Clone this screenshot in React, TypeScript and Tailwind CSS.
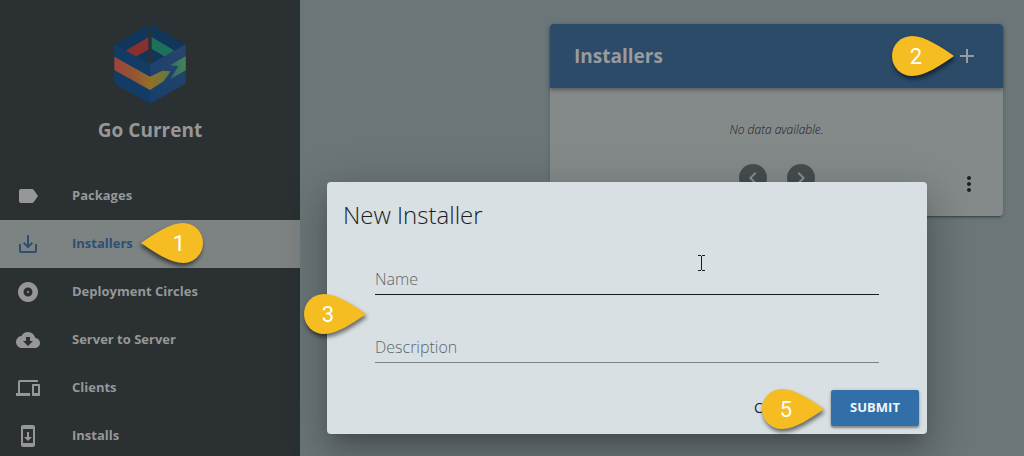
import type { ReactNode } from "react";
import type { IconType } from "react-icons";
import {
  MdAdd,
  MdAlbum,
  MdChevronLeft,
  MdChevronRight,
  MdCloudDownload,
  MdDevices,
  MdLabel,
  MdMoreVert,
  MdSaveAlt,
  MdSystemUpdate,
} from "react-icons/md";

interface NavItem {
  label: string;
  icon: IconType;
  active?: boolean;
}

const NAV_ITEMS: NavItem[] = [
  { label: "Packages", icon: MdLabel },
  { label: "Installers", icon: MdSaveAlt, active: true },
  { label: "Deployment Circles", icon: MdAlbum },
  { label: "Server to Server", icon: MdCloudDownload },
  { label: "Clients", icon: MdDevices },
  { label: "Installs", icon: MdSystemUpdate },
];

function Logo() {
  return (
    <svg viewBox="90 42 240 240" className="size-20" aria-hidden="true">
      <defs>
        <linearGradient id="band" x1="103" x2="272" y1="0" y2="0" gradientUnits="userSpaceOnUse">
          <stop offset="0" stopColor="#a0433a" />
          <stop offset="0.35" stopColor="#935632" />
          <stop offset="0.65" stopColor="#93702a" />
          <stop offset="1" stopColor="#5c7a3c" />
        </linearGradient>
        <linearGradient id="tip" x1="270" x2="317" y1="0" y2="0" gradientUnits="userSpaceOnUse">
          <stop offset="0" stopColor="#2f705c" />
          <stop offset="1" stopColor="#47825a" />
        </linearGradient>
        <linearGradient id="right" x1="210" x2="317" y1="281" y2="105" gradientUnits="userSpaceOnUse">
          <stop offset="0" stopColor="#173f6c" />
          <stop offset="1" stopColor="#29446b" />
        </linearGradient>
      </defs>
      <path d="M103 105 205 43v116l-5-1z" fill="#10365a" />
      <path d="m138 121 67-39v37l-44 24z" fill="#87302f" />
      <path d="M317 105 215 43v116l5-1z" fill="#10365a" />
      <path d="m282 121-67-40v36l43 25z" fill="#1d7059" />
      <path d="M103 103 210 163v118l-101-57q-6-4-6-10z" fill="#123c66" />
      <path d="M317 103 210 163v118l101-57q6-4 6-10z" fill="url(#right)" />
      <path d="m103 140 107 60 37-18 25 2-21 30-41 26-107-60z" fill="url(#band)" />
      <path d="m317 139-47 27 25 3-24 38 46-26z" fill="url(#tip)" />
    </svg>
  );
}

interface CalloutProps {
  children: ReactNode;
  className: string;
  pointsLeft?: boolean;
}

function Callout({ children, className, pointsLeft = false }: CalloutProps) {
  return (
    <div
      className={`pointer-events-none absolute z-10 flex h-10 w-[62px] ${
        pointsLeft ? "justify-end" : "justify-start"
      } ${className}`}
    >
      <svg
        viewBox="0 0 62 40"
        className={`absolute inset-0 overflow-visible drop-shadow-[1px_3px_2px_rgba(0,0,0,0.55)] ${
          pointsLeft ? "-scale-x-100" : ""
        }`}
        aria-hidden="true"
      >
        <path
          d="M62 20C49 11 33 0 20 0a20 20 0 0 0 0 40C33 40 49 29 62 20Z"
          fill="#f5bd22"
        />
      </svg>
      <span className="relative w-12 text-center font-[Roboto,sans-serif] text-[22px] leading-[42px] text-white">
        {children}
      </span>
    </div>
  );
}

function Sidebar() {
  return (
    <aside className="w-[300px] shrink-0 bg-[#2b3033] text-[#979797]">
      <div className="flex flex-col items-center pt-6 pb-7">
        <Logo />
        <h1 className="mt-3 text-[19px] leading-7 font-bold">Go Current</h1>
      </div>
      <nav>
        <ul>
          {NAV_ITEMS.map(({ label, icon: Icon, active }) => (
            <li key={label} className="relative">
              <a
                href="#"
                className={`flex h-12 items-center gap-8 px-4 text-[13px] font-bold ${
                  active ? "bg-[#7d8382] text-[#2c4f72]" : ""
                }`}
              >
                <Icon className="size-6" />
                {label}
              </a>
              {active && (
                <Callout pointsLeft className="top-[3px] left-[141px]">
                  1
                </Callout>
              )}
            </li>
          ))}
        </ul>
      </nav>
    </aside>
  );
}

function InstallersCard() {
  return (
    <section className="flex h-48 flex-col rounded-sm bg-[#84898a] shadow-[0_3px_1px_-2px_rgba(0,0,0,0.2),0_2px_2px_rgba(0,0,0,0.14),0_1px_5px_rgba(0,0,0,0.12)]">
      <header className="relative flex h-16 items-center justify-between rounded-t-sm bg-[#2b4b69] px-6 text-[#999b9d] shadow-[0_2px_4px_rgba(0,0,0,0.35)]">
        <h2 className="text-[19px] font-bold">Installers</h2>
        <button type="button" aria-label="Add installer">
          <MdAdd className="size-6" />
        </button>
        <Callout className="top-3 right-[49px]">2</Callout>
      </header>
      <p className="mt-8 text-center text-xs leading-5 font-light text-[#1c1e1f] italic">
        No data available.
      </p>
      <div className="mt-6 flex justify-center gap-5">
        <button
          type="button"
          aria-label="Previous page"
          className="flex size-7 items-center justify-center rounded-full bg-[#474c4e] text-[#8b8f90]"
        >
          <MdChevronLeft className="size-6" />
        </button>
        <button
          type="button"
          aria-label="Next page"
          className="flex size-7 items-center justify-center rounded-full bg-[#474c4e] text-[#8b8f90]"
        >
          <MdChevronRight className="size-6" />
        </button>
      </div>
      <button
        type="button"
        aria-label="More options"
        className="-mt-5 mr-[22px] self-end text-[#1d1f20]"
      >
        <MdMoreVert className="size-6" />
      </button>
    </section>
  );
}

interface FieldProps {
  id: string;
  label: string;
  focused?: boolean;
}

function Field({ id, label, focused = false }: FieldProps) {
  return (
    <div className="grid">
      <label
        htmlFor={id}
        className="col-start-1 row-start-1 text-base leading-8 font-light text-[#5f6567]"
      >
        {label}
      </label>
      <input
        id={id}
        type="text"
        className={`col-start-1 row-start-1 h-8 w-full border-b bg-transparent outline-none ${
          focused ? "border-[#16191a]" : "border-[#7c8284]"
        }`}
      />
    </div>
  );
}

function NewInstallerDialog() {
  return (
    <div className="absolute inset-0 flex items-start justify-center pt-[182px] pl-[230px]">
      <form
        role="dialog"
        aria-labelledby="dialog-title"
        className="relative w-full max-w-[600px] rounded-sm bg-[#d8e0e3] shadow-[0_11px_15px_-7px_rgba(0,0,0,0.2),0_24px_38px_3px_rgba(0,0,0,0.14),0_9px_46px_8px_rgba(0,0,0,0.12)]"
      >
        <h2
          id="dialog-title"
          className="px-4 pt-4 text-2xl leading-[34px] font-light text-[#1b1e1f]"
        >
          New Installer
        </h2>
        <div className="relative mt-[31px] flex flex-col gap-9 px-12">
          <Field id="name" label="Name" focused />
          <Field id="description" label="Description" />
          <Callout className="top-[31px] -left-[23px]">3</Callout>
        </div>
        <div className="relative mt-[27px] flex justify-end gap-2 px-2 pb-2">
          <button type="button" className="h-9 w-[86px] text-sm text-[#1b1e1f]">
            CANCEL
          </button>
          <button
            type="submit"
            className="h-9 w-[88px] rounded-xs bg-[#326fa8] text-[13px] font-bold text-[#f1f5f8] shadow-[0_2px_2px_rgba(0,0,0,0.3),0_1px_4px_rgba(0,0,0,0.2)]"
          >
            SUBMIT
          </button>
          <Callout className="-top-px right-[103px]">5</Callout>
        </div>
        <svg
          viewBox="0 0 7 16"
          className="absolute top-[73px] left-[371px] h-4 w-[7px]"
          fill="none"
          stroke="#1b1e1f"
          shapeRendering="crispEdges"
          aria-hidden="true"
        >
          <path d="M0 .5h3M4 .5h3M3.5 1v14M0 15.5h3M4 15.5h3" />
        </svg>
      </form>
    </div>
  );
}

export default function App() {
  return (
    <div className="relative flex h-screen overflow-hidden bg-[#6b7678] font-['Open_Sans','Noto_Sans',sans-serif]">
      <Sidebar />
      <main className="min-w-0 flex-1 pt-6 pr-[21px] pl-[250px]">
        <InstallersCard />
      </main>
      <NewInstallerDialog />
    </div>
  );
}
